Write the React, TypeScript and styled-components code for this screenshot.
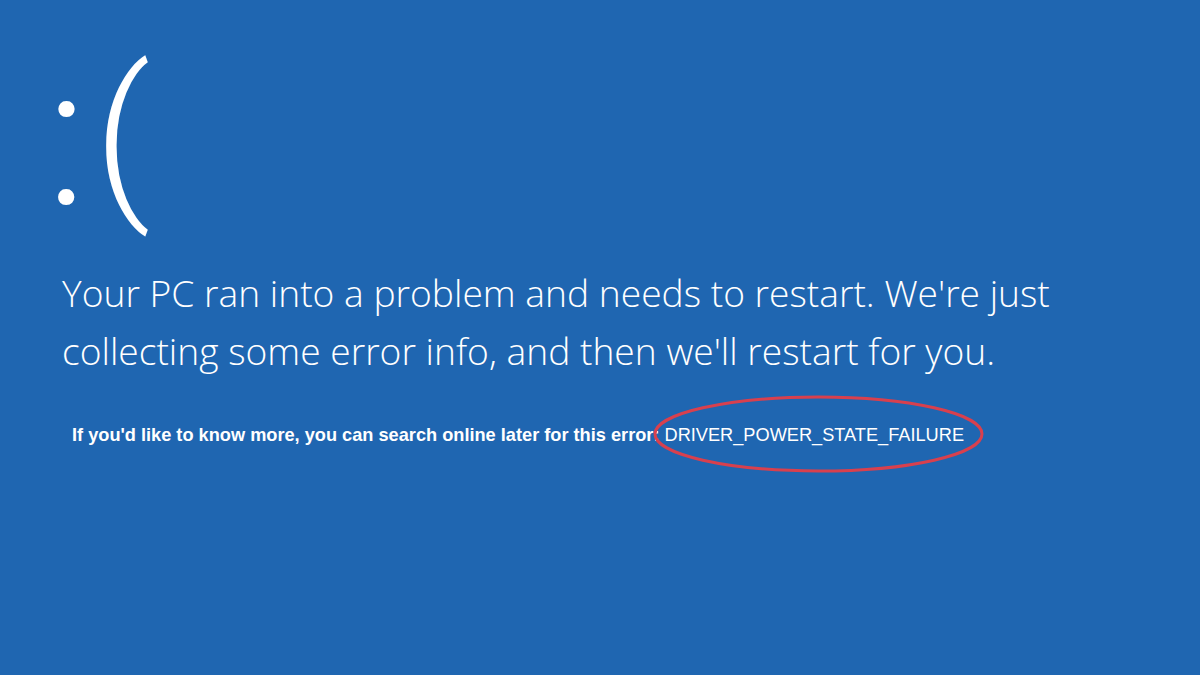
import React from 'react';
import styled, { createGlobalStyle } from 'styled-components';

const GlobalStyle = createGlobalStyle`
  html, body {
    margin: 0;
    padding: 0;
    background: #1f66b1;
  }
`;

const Screen = styled.div`
  width: 1200px;
  height: 675px;
  box-sizing: border-box;
  padding: 40px 0 0 62px;
  background: #1f66b1;
  color: #ffffff;
`;

const Face = styled.div`
  display: flex;
  align-items: flex-start;
  gap: 7px;
  margin-left: -16px;
  font-family: Roboto, 'Open Sans', sans-serif;
  font-weight: 300;
  line-height: 1;
`;

const Glyph = styled.span<{ $size: number; $drop?: number }>`
  font-size: ${(p) => p.$size}px;
  margin-top: ${(p) => p.$drop ?? 0}px;
`;

const Message = styled.p`
  margin: 29px 0 0 0;
  font-family: 'Open Sans', sans-serif;
  font-weight: 300;
  font-size: 37.2px;
  line-height: 58px;
  max-width: 1010px;
`;

const Details = styled.p`
  margin: 44px 0 0 10px;
  font-family: 'Liberation Sans', Arial, sans-serif;
  font-weight: 700;
  font-size: 18.2px;
  line-height: 22px;
`;

const ErrorCode = styled.span`
  position: relative;
  font-weight: 400;
`;

const Ring = styled.svg`
  position: absolute;
  left: -12px;
  top: -30px;
  width: 331px;
  height: 78px;
  overflow: visible;
  pointer-events: none;
`;

const message =
  "Your PC ran into a problem and needs to restart. We're just collecting some error info, and then we'll restart for you.";

export default function App() {
  return (
    <>
      <GlobalStyle />
      <Screen>
        <Face>
          <Glyph $size={195}>:</Glyph>
          <Glyph $size={177} $drop={7}>
            (
          </Glyph>
        </Face>
        <Message>{message}</Message>
        <Details>
          If you'd like to know more, you can search online later for this error:{' '}
          <ErrorCode>
            DRIVER_POWER_STATE_FAILURE
            <Ring viewBox="0 0 331 78">
              <ellipse
                cx="165.5"
                cy="39"
                rx="163.5"
                ry="37"
                fill="none"
                stroke="#d8404e"
                strokeWidth="3"
              />
            </Ring>
          </ErrorCode>
        </Details>
      </Screen>
    </>
  );
}
